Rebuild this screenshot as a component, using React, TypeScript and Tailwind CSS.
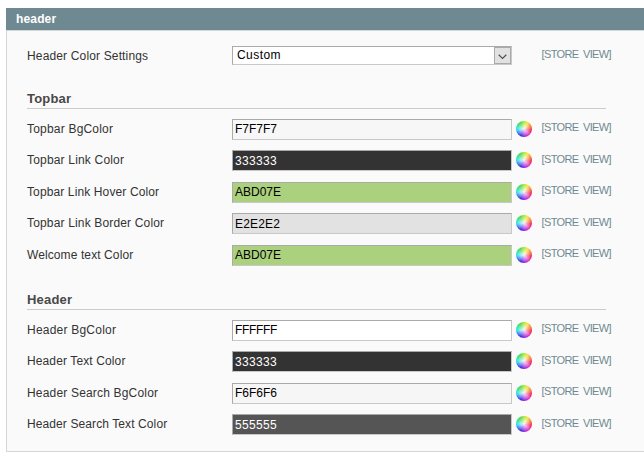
type FieldRow = {
  label: string;
  value: string;
  tone: string;
  tracking: string;
  low?: boolean;
};

const topbar: FieldRow[] = [
  { label: "Topbar BgColor", value: "F7F7F7", tone: "bg-[#f7f7f7] text-black", tracking: "tracking-[0.2px]" },
  { label: "Topbar Link Color", value: "333333", tone: "bg-[#333333] text-white tracking-[0.33px]", tracking: "tracking-[0.18px]", low: true },
  { label: "Topbar Link Hover Color", value: "ABD07E", tone: "bg-[#abd07e] text-black", tracking: "tracking-[0.12px]" },
  { label: "Topbar Link Border Color", value: "E2E2E2", tone: "bg-[#e2e2e2] text-black tracking-[0.16px]", tracking: "tracking-[0.16px]", low: true },
  { label: "Welcome text Color", value: "ABD07E", tone: "bg-[#abd07e] text-black", tracking: "tracking-[0.1px]" },
];

const header: FieldRow[] = [
  { label: "Header BgColor", value: "FFFFFF", tone: "bg-white text-black tracking-[-0.33px]", tracking: "tracking-[0.22px]" },
  { label: "Header Text Color", value: "333333", tone: "bg-[#333333] text-white tracking-[0.33px]", tracking: "tracking-[0.12px]", low: true },
  { label: "Header Search BgColor", value: "F6F6F6", tone: "bg-[#f6f6f6] text-black", tracking: "tracking-[0.18px]" },
  { label: "Header Search Text Color", value: "555555", tone: "bg-[#555555] text-white tracking-[0.33px]", tracking: "tracking-[0.1px]", low: true },
];

function ColorWheel() {
  return (
    <span className="mt-0.5 ml-1 size-4 shrink-0 rounded-full bg-[radial-gradient(circle,#ffffffe8_0%,#ffffff98_25%,#ffffff40_50%,transparent_66%),conic-gradient(from_0deg,#a5e83c,#f8e43a_30deg,#f8843c_65deg,#e8264c_100deg,#ee35c4_135deg,#a32ae0_170deg,#3d25dc_205deg,#3b75f5_235deg,#28e4f2_270deg,#2de29a_295deg,#48d940_330deg,#a5e83c)]" />
  );
}

function Scope({ className }: { className: string }) {
  return (
    <span className={`whitespace-nowrap text-[11px] leading-4 tracking-[-0.62px] [word-spacing:2px] text-[#6f8992] ${className}`}>
      [STORE VIEW]
    </span>
  );
}

function Field({ row }: { row: FieldRow }) {
  return (
    <div className={`flex items-start ${row.low ? "h-8" : "h-[31px]"}`}>
      <label className={`w-[205px] shrink-0 whitespace-nowrap pt-0.5 leading-4 ${row.tracking}`}>{row.label}</label>
      <div
        className={`h-[21px] w-[280px] shrink-0 border border-t-[#aaaaaa] border-r-[#c8c8c8] border-b-[#c8c8c8] border-l-[#aaaaaa] pl-0.5 leading-4 ${row.low ? "pt-0.5" : "pt-px"} ${row.tone}`}
      >
        {row.value}
      </div>
      <ColorWheel />
      <Scope className={row.low ? "ml-[9.5px] mt-px" : "ml-[9.5px]"} />
    </div>
  );
}

function SectionTitle({ children }: { children: string }) {
  return (
    <h4 className="h-[18px] w-[579px] border-b border-[#cccccc] text-[13px] leading-4 font-bold tracking-[0.2px] text-[#494848]">
      {children}
    </h4>
  );
}

export default function App() {
  return (
    <div className="h-[457px] w-[644px] overflow-hidden bg-white pt-2 pl-1.5 font-['Liberation_Sans',Arial,sans-serif] text-[12px] text-[#333333]">
      <h3 className="h-[22px] bg-[#6f8992] pl-2.5 text-[12px] leading-[22px] font-bold tracking-[0.15px] text-white">header</h3>
      <section className="h-[422px] border-y border-l border-[#d6d6d6] bg-[#fafafa] pt-[15px] pl-5">
        <div className="flex h-[45px] items-start">
          <label className="w-[205px] shrink-0 pt-0.5 leading-4 tracking-[0.15px]">Header Color Settings</label>
          <div className="flex h-[19px] w-[280px] shrink-0 justify-between border border-t-[#aaaaaa] border-r-[#c8c8c8] border-b-[#c8c8c8] border-l-[#aaaaaa] bg-white pl-1 leading-4 text-black">
            <span className="tracking-[0.45px]">Custom</span>
            <span className="flex h-[17px] w-[17px] items-center justify-center border border-[#aaaaaa] bg-[#e1e1e1]">
              <svg viewBox="0 0 9 6" className="mt-[3px] h-1.5 w-[9px]" fill="none" stroke="#505050" strokeWidth="1.2">
                <path d="M.7.8 4.5 4.5 8.3.8" />
              </svg>
            </span>
          </div>
          <Scope className="ml-[29.5px]" />
        </div>
        <SectionTitle>Topbar</SectionTitle>
        <div className="h-[173px] pt-2.5">
          {topbar.map((row) => (
            <Field key={row.label} row={row} />
          ))}
        </div>
        <div className="pt-[10px]">
          <SectionTitle>Header</SectionTitle>
          <div className="pt-2.5">
            {header.map((row) => (
              <Field key={row.label} row={row} />
            ))}
          </div>
        </div>
      </section>
    </div>
  );
}
